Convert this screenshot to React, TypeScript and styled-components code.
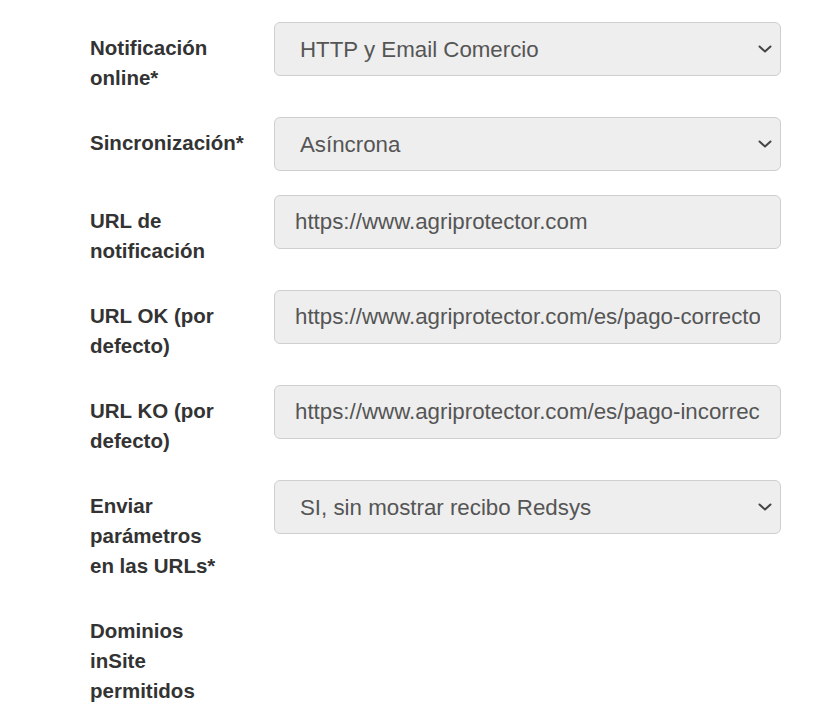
import React from 'react';
import styled, { createGlobalStyle } from 'styled-components';

const GlobalStyle = createGlobalStyle`
  html, body {
    margin: 0;
    background: #fff;
  }
  body {
    font-family: 'Liberation Sans', Arial, sans-serif;
  }
`;

const Form = styled.form`
  padding: 22px 0 0 90px;
`;

const Row = styled.div`
  display: flex;
  align-items: flex-start;
  margin-bottom: 24px;
`;

const Label = styled.label`
  flex: 0 0 184px;
  padding-top: 11px;
  font-size: 20.5px;
  line-height: 30px;
  font-weight: bold;
  color: #333;
`;

const Control = styled.div`
  position: relative;
  width: 507px;
`;

const fieldBase = `
  box-sizing: border-box;
  width: 100%;
  height: 54px;
  margin: 0;
  border: 1px solid #cfcfcf;
  border-radius: 6px;
  background: #eee;
  color: #555;
  font-family: 'Liberation Sans', Arial, sans-serif;
  font-size: 22.3px;
  outline: none;
`;

const Select = styled.select`
  ${fieldBase}
  appearance: none;
  -webkit-appearance: none;
  padding: 0 44px 0 25px;
`;

const Input = styled.input`
  ${fieldBase}
  padding: 0 20px 0 20px;
`;

const Chevron = styled.svg`
  position: absolute;
  right: 9px;
  top: 50%;
  width: 14px;
  height: 8px;
  margin-top: -4px;
  pointer-events: none;
`;

const Arrow = () => (
  <Chevron viewBox="0 0 14 8">
    <polyline
      points="1.5,1.5 7,6.5 12.5,1.5"
      fill="none"
      stroke="#444"
      strokeWidth="2"
      strokeLinecap="round"
      strokeLinejoin="round"
    />
  </Chevron>
);

interface Field {
  label: string[];
  kind?: 'select' | 'input';
  value?: string;
}

const fields: Field[] = [
  { label: ['Notificación', 'online*'], kind: 'select', value: 'HTTP y Email Comercio' },
  { label: ['Sincronización*'], kind: 'select', value: 'Asíncrona' },
  { label: ['URL de', 'notificación'], kind: 'input', value: 'https://www.agriprotector.com' },
  { label: ['URL OK (por', 'defecto)'], kind: 'input', value: 'https://www.agriprotector.com/es/pago-correcto/' },
  { label: ['URL KO (por', 'defecto)'], kind: 'input', value: 'https://www.agriprotector.com/es/pago-incorrecto/' },
  { label: ['Enviar', 'parámetros', 'en las URLs*'], kind: 'select', value: 'SI, sin mostrar recibo Redsys' },
  { label: ['Dominios', 'inSite', 'permitidos'] },
];

const App = () => (
  <>
    <GlobalStyle />
    <Form>
      {fields.map((f, i) => (
        <Row key={i}>
          <Label>
            {f.label.map((line, j) => (
              <React.Fragment key={j}>
                {j > 0 && <br />}
                {line}
              </React.Fragment>
            ))}
          </Label>
          {f.kind === 'select' && (
            <Control>
              <Select defaultValue={f.value}>
                <option>{f.value}</option>
              </Select>
              <Arrow />
            </Control>
          )}
          {f.kind === 'input' && (
            <Control>
              <Input value={f.value} readOnly />
            </Control>
          )}
        </Row>
      ))}
    </Form>
  </>
);

export default App;
